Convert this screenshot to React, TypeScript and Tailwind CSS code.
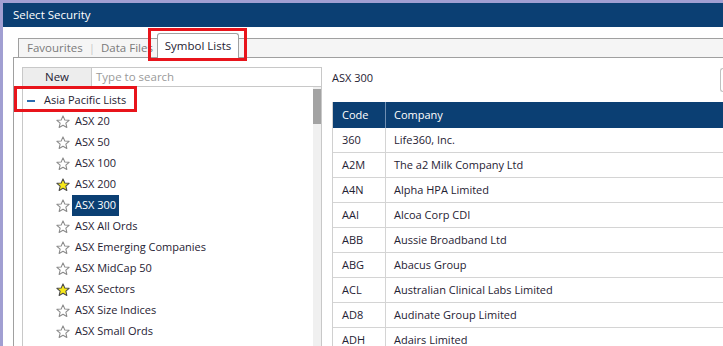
import React from "react";

/* ---------------- DATA ---------------- */
const LISTS = [
  { name: "ASX 20", fav: false },
  { name: "ASX 50", fav: false },
  { name: "ASX 100", fav: false },
  { name: "ASX 200", fav: true },
  { name: "ASX 300", fav: false, selected: true },
  { name: "ASX All Ords", fav: false },
  { name: "ASX Emerging Companies", fav: false },
  { name: "ASX MidCap 50", fav: false },
  { name: "ASX Sectors", fav: true },
  { name: "ASX Size Indices", fav: false },
  { name: "ASX Small Ords", fav: false },
  { name: "ASX Small Resources", fav: false },
];

const ROWS = [
  ["360", "Life360, Inc."],
  ["A2M", "The a2 Milk Company Ltd"],
  ["A4N", "Alpha HPA Limited"],
  ["AAI", "Alcoa Corp CDI"],
  ["ABB", "Aussie Broadband Ltd"],
  ["ABG", "Abacus Group"],
  ["ACL", "Australian Clinical Labs Limited"],
  ["AD8", "Audinate Group Limited"],
  ["ADH", "Adairs Limited"],
];

const Star: React.FC<{ fav: boolean }> = ({ fav }) => (
  <svg width="14" height="14" viewBox="0 0 24 24" className="shrink-0">
    <path
      d="M12 1.5l3.1 7 7.4.6-5.6 4.9 1.7 7.4L12 17.5l-6.6 3.9 1.7-7.4L1.5 9.1l7.4-.6z"
      fill={fav ? "#f7e81a" : "#ffffff"}
      stroke={fav ? "#4a4a4a" : "#8a8a8a"}
      strokeWidth="1.8"
      strokeLinejoin="round"
    />
  </svg>
);

/* ---------------- COMPONENT ---------------- */
const App: React.FC = () => {
  return (
    <div
      className="w-[723px] h-[346px] overflow-hidden bg-[#a19fd2] pt-[3px] pl-[3px] text-[11px] text-[#1f2233]"
      style={{ fontFamily: '"Open Sans", "Noto Sans", sans-serif' }}
    >
      <div className="relative flex flex-col h-full bg-white">
        {/* Title bar */}
        <div className="h-[24px] shrink-0 bg-[#0b3f73] text-white flex items-center pl-[10px] text-[11.5px]">
          Select Security
        </div>

        {/* Tabs */}
        <div className="pt-[11px] pl-[15px] shrink-0">
          <div className="relative h-[19px] bg-[#f5f5f5] border-t border-l border-[#a0a0a0] flex items-center text-[#7a7a7a] text-[11.5px]">
            <span className="pl-[8px]">Favourites</span>
            <span className="mx-[6px] text-[#c8c8c8]">|</span>
            <span>Data Files</span>
            <div className="absolute left-[138px] top-[-6px] w-[82px] h-[25px] bg-white border border-b-0 border-[#a0a0a0] rounded-t-[3px] flex items-center justify-center text-[#1f2233]">
              Symbol Lists
            </div>
          </div>
        </div>

        {/* Panel */}
        <div className="ml-[10px] flex-1 border-t border-l border-[#a0a0a0] flex pt-[9px] pl-[8px] gap-[10px] min-h-0">
          {/* Left pane */}
          <div className="w-[300px] flex flex-col shrink-0">
            <div className="flex h-[20px] shrink-0 text-[11.5px]">
              <div className="w-[70px] bg-[#ededed] border border-[#c8c8c8] flex items-center justify-center">
                New
              </div>
              <div className="flex-1 border border-l-0 border-[#c8c8c8] flex items-center pl-[4px] text-[#9a9a9a]">
                Type to search
              </div>
            </div>
            <div className="flex-1 flex border-l border-r border-[#c8c8c8] min-h-0">
              <div className="flex-1 pt-[3px]">
                <div className="h-[21px] flex items-center pl-[4px]">
                  <span className="w-[8px] h-[2px] bg-[#2c6cb0] mr-[9px]" />
                  <span>Asia Pacific Lists</span>
                </div>
                {LISTS.map((l) => (
                  <div key={l.name} className="h-[21px] flex items-center pl-[33px] gap-[2px]">
                    <Star fav={l.fav} />
                    <span
                      className={
                        l.selected
                          ? "bg-[#0b3f73] text-white h-[21px] flex items-center px-[3px]"
                          : "px-[3px]"
                      }
                    >
                      {l.name}
                    </span>
                  </div>
                ))}
              </div>
              <div className="w-[8px] bg-[#f0f0f0] pt-[2px]">
                <div className="h-[35px] bg-[#a3a3a3]" />
              </div>
            </div>
          </div>

          {/* Right pane */}
          <div className="flex-1 flex flex-col min-w-0">
            <div className="h-[20px] flex items-center justify-between mt-[1px]">
              <span>ASX 300</span>
              <div className="w-[3px] h-[24px] border border-r-0 border-[#c0c0c0] rounded-l-[3px] mt-[3px]" />
            </div>
            <div className="mt-[14px] border-l border-[#d0d0d0]">
              <div className="flex h-[26px] bg-[#0b3f73] text-white">
                <div className="w-[53px] pl-[9px] flex items-center border-r border-[#6f8fb3]">Code</div>
                <div className="flex-1 pl-[8px] flex items-center">Company</div>
              </div>
              {ROWS.map(([code, name]) => (
                <div key={code} className="flex h-[25px] border-b border-[#d4d4d4]">
                  <div className="w-[53px] pl-[9px] flex items-center border-r border-[#d4d4d4]">{code}</div>
                  <div className="flex-1 pl-[8px] flex items-center">{name}</div>
                </div>
              ))}
            </div>
          </div>
        </div>

        {/* Red annotation boxes */}
        <div className="absolute left-[145px] top-[25px] w-[99px] h-[33px] border-[3px] border-[#e8141b]" />
        <div className="absolute left-[11px] top-[83px] w-[123px] h-[26px] border-[3px] border-[#e8141b]" />
      </div>
    </div>
  );
};

export default App;
